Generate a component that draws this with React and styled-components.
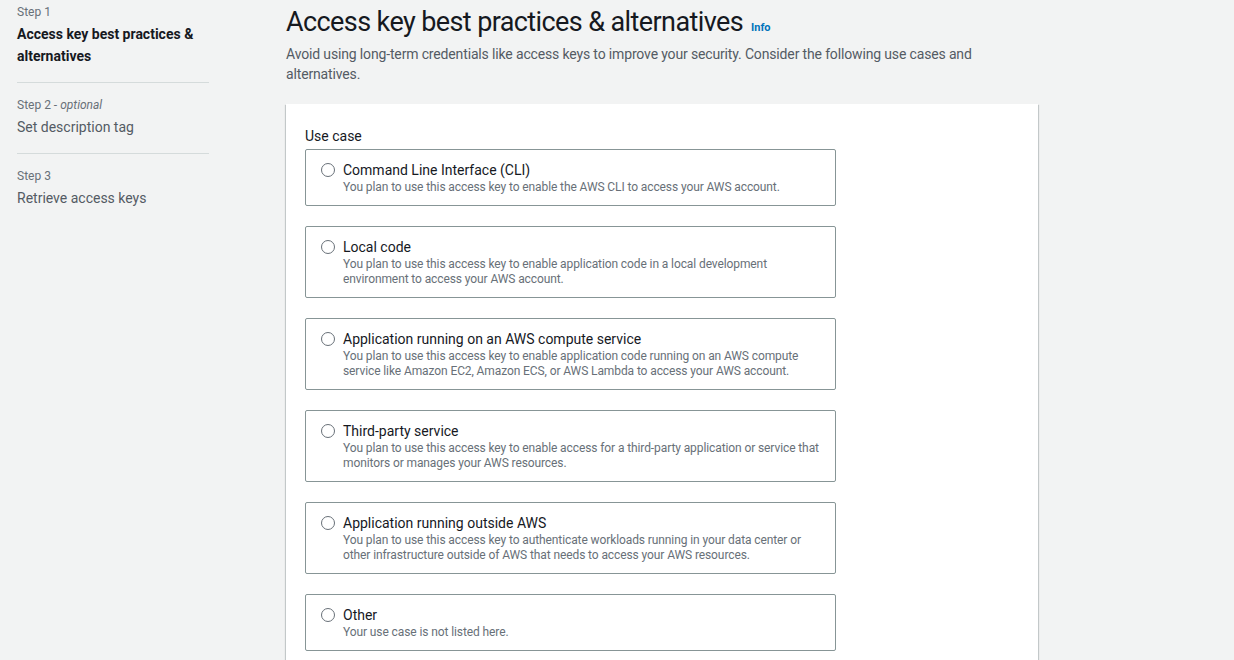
import React from "react";
import styled, { createGlobalStyle } from "styled-components";

const GlobalStyle = createGlobalStyle`
  html, body {
    margin: 0;
    padding: 0;
    background: #f2f3f3;
    font-family: Roboto, "Noto Sans", "Liberation Sans", sans-serif;
    color: #16191f;
  }
  * { box-sizing: border-box; }
`;

const Page = styled.div`
  display: flex;
  align-items: flex-start;
  min-height: 660px;
  padding: 0 0 0 17px;
`;

const Side = styled.nav`
  width: 192px;
  flex-shrink: 0;
  padding-top: 4px;
`;

const StepItem = styled.div`
  padding-bottom: ${(p) => (p.last ? "0" : "15px")};
  margin-bottom: ${(p) => (p.last ? "0" : "14px")};
  border-bottom: ${(p) => (p.last ? "none" : "1px solid #d5dbdb")};
`;

const StepLabel = styled.div`
  font-size: 12px;
  line-height: 16px;
  color: #687078;
  margin-bottom: 3px;
  em { font-style: italic; }
`;

const StepTitle = styled.div`
  font-size: 14px;
  line-height: 22px;
  color: ${(p) => (p.active ? "#16191f" : "#545b64")};
  font-weight: ${(p) => (p.active ? 700 : 400)};
`;

const Main = styled.main`
  margin-left: 77px;
  width: 752px;
`;

const Header = styled.header`
  padding-top: 6px;
`;

const Title = styled.h1`
  margin: 0;
  font-size: 27px;
  letter-spacing: -0.6px;
  line-height: 33px;
  font-weight: 400;
  color: #16191f;
  display: flex;
  align-items: baseline;
  gap: 8px;
`;

const InfoLink = styled.a`
  font-size: 11px;
  letter-spacing: 0;
  font-weight: 700;
  color: #0073bb;
  text-decoration: none;
`;

const Description = styled.p`
  margin: 0;
  font-size: 14px;
  letter-spacing: -0.15px;
  line-height: 20px;
  color: #545b64;
  max-width: 700px;
`;

const Card = styled.section`
  margin-top: 20px;
  background: #fff;
  box-shadow: 0 1px 1px 0 rgba(0, 28, 36, 0.3), 1px 1px 1px 0 rgba(0, 28, 36, 0.15),
    -1px 1px 1px 0 rgba(0, 28, 36, 0.15);
  padding: 22px 19px 20px;
`;

const FieldLabel = styled.div`
  font-size: 14px;
  line-height: 20px;
  color: #16191f;
  margin-bottom: 3px;
`;

const Options = styled.div`
  display: flex;
  flex-direction: column;
  gap: 20px;
  width: 531px;
`;

const Option = styled.label`
  display: flex;
  align-items: flex-start;
  gap: 8px;
  border: 1px solid #879596;
  border-radius: 2px;
  padding: 10px 10px 10px 15px;
  cursor: pointer;
`;

const Radio = styled.span`
  width: 14px;
  height: 14px;
  margin-top: 3px;
  flex-shrink: 0;
  border-radius: 50%;
  border: 1.5px solid #687078;
  background: #fff;
`;

const OptionText = styled.div`
  display: flex;
  flex-direction: column;
`;

const OptionTitle = styled.span`
  font-size: 14px;
  line-height: 20px;
  color: #16191f;
`;

const OptionDesc = styled.span`
  font-size: 12px;
  letter-spacing: -0.1px;
  line-height: 15px;
  color: #687078;
`;

const steps = [
  { label: "Step 1", title: "Access key best practices & alternatives", active: true },
  { label: "Step 2", optional: true, title: "Set description tag" },
  { label: "Step 3", title: "Retrieve access keys" },
];

const useCases = [
  {
    title: "Command Line Interface (CLI)",
    desc: "You plan to use this access key to enable the AWS CLI to access your AWS account.",
  },
  {
    title: "Local code",
    desc: "You plan to use this access key to enable application code in a local development environment to access your AWS account.",
  },
  {
    title: "Application running on an AWS compute service",
    desc: "You plan to use this access key to enable application code running on an AWS compute service like Amazon EC2, Amazon ECS, or AWS Lambda to access your AWS account.",
  },
  {
    title: "Third-party service",
    desc: "You plan to use this access key to enable access for a third-party application or service that monitors or manages your AWS resources.",
  },
  {
    title: "Application running outside AWS",
    desc: "You plan to use this access key to authenticate workloads running in your data center or other infrastructure outside of AWS that needs to access your AWS resources.",
  },
  {
    title: "Other",
    desc: "Your use case is not listed here.",
  },
];

const App = () => {
  return (
    <>
      <GlobalStyle />
      <Page>
        <Side>
          {steps.map((step, i) => (
            <StepItem key={step.label} last={i === steps.length - 1}>
              <StepLabel>
                {step.label}
                {step.optional && (
                  <>
                    {" - "}
                    <em>optional</em>
                  </>
                )}
              </StepLabel>
              <StepTitle active={step.active}>{step.title}</StepTitle>
            </StepItem>
          ))}
        </Side>
        <Main>
          <Header>
            <Title>
              Access key best practices &amp; alternatives
              <InfoLink href="#">Info</InfoLink>
            </Title>
            <Description>
              Avoid using long-term credentials like access keys to improve your security. Consider the
              following use cases and alternatives.
            </Description>
          </Header>
          <Card>
            <FieldLabel>Use case</FieldLabel>
            <Options>
              {useCases.map((uc) => (
                <Option key={uc.title}>
                  <Radio />
                  <OptionText>
                    <OptionTitle>{uc.title}</OptionTitle>
                    <OptionDesc>{uc.desc}</OptionDesc>
                  </OptionText>
                </Option>
              ))}
            </Options>
          </Card>
        </Main>
      </Page>
    </>
  );
};

export default App;
